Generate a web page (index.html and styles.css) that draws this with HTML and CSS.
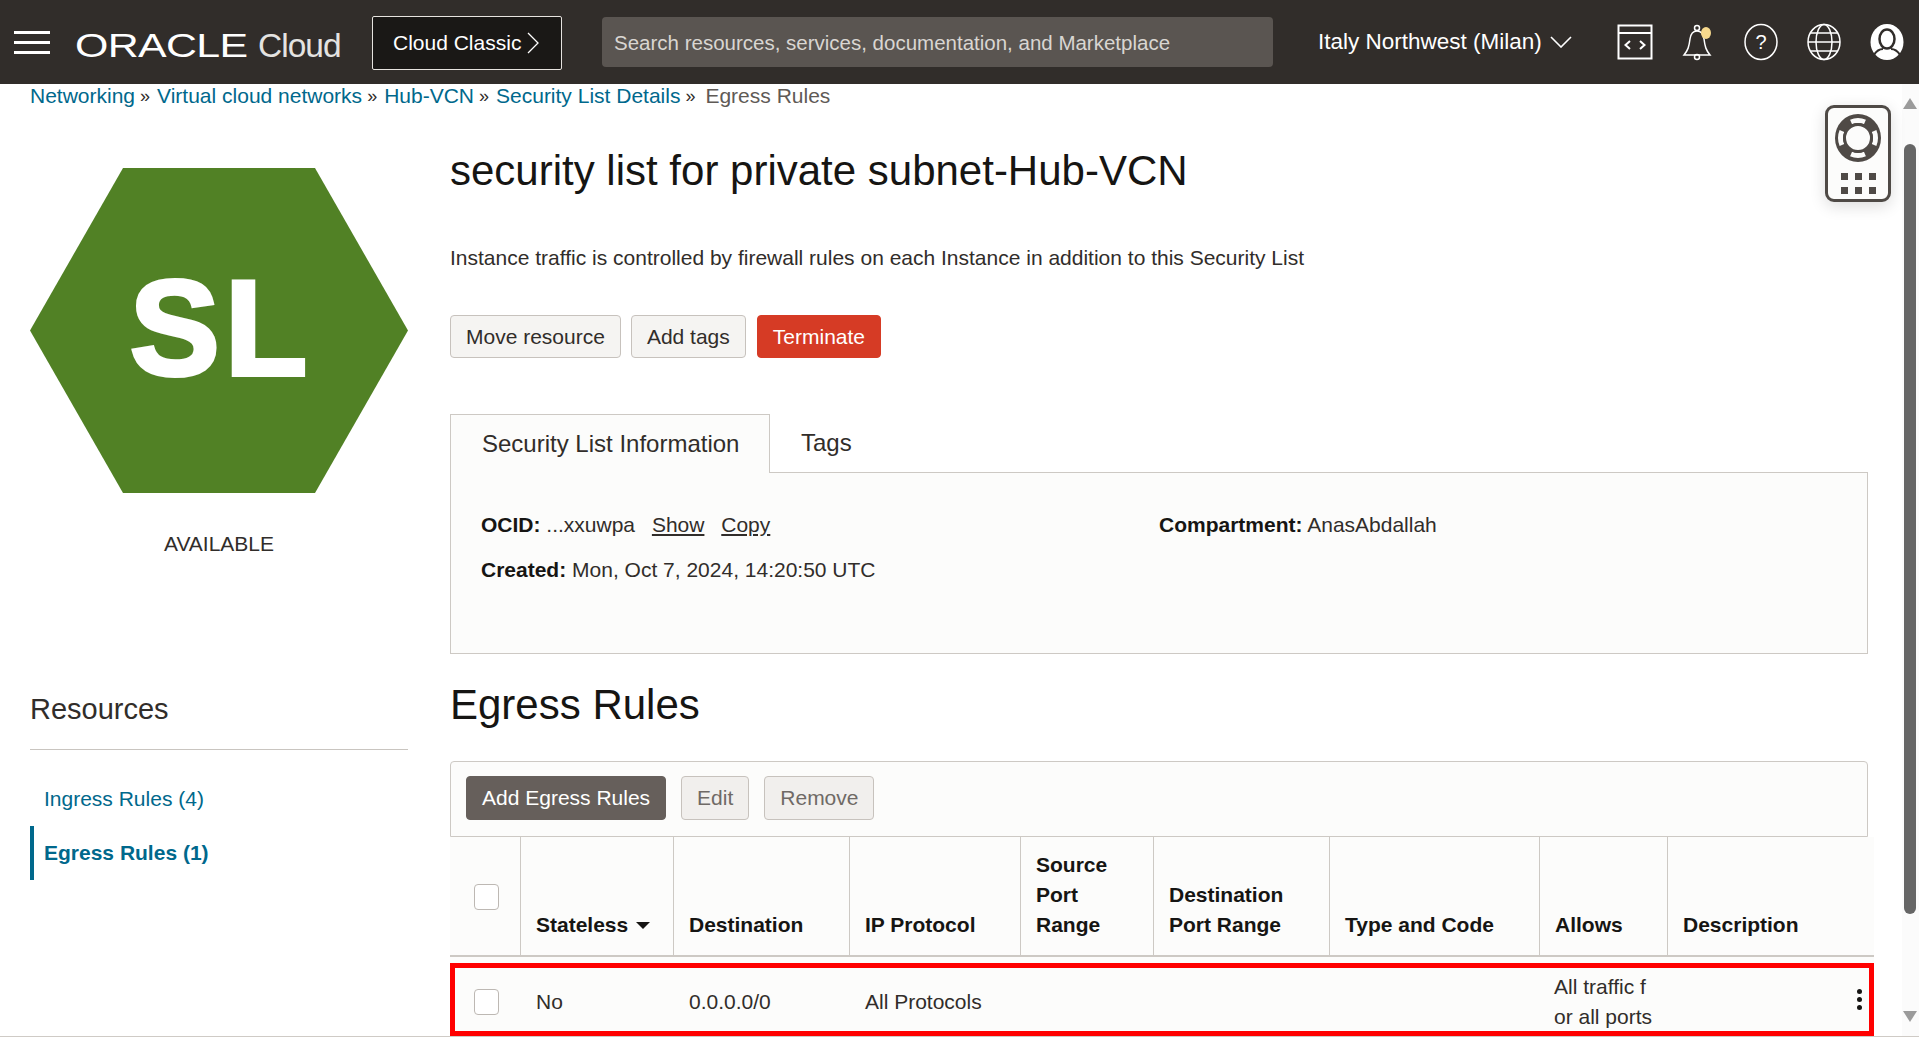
FILE: index.html
```html
<!DOCTYPE html>
<html lang="en">
<head>
<meta charset="utf-8">
<title>Egress Rules</title>
<link rel="stylesheet" href="styles.css">
</head>
<body>
<div class="page">
  <header class="topbar">
    <div class="burger"><i></i><i></i><i></i></div>
    <div class="logo"><span class="logo-oracle">ORACLE</span><span class="logo-cloud">Cloud</span></div>
    <div class="classic">Cloud Classic
      <svg class="classic-arrow" width="12" height="22" viewBox="0 0 12 22"><path d="M1 1l10 10L1 21" fill="none" stroke="#fff" stroke-width="1.3"/></svg>
    </div>
    <div class="search">Search resources, services, documentation, and Marketplace</div>
    <div class="region">Italy Northwest (Milan)
      <svg width="22" height="12" viewBox="0 0 22 12"><path d="M1 1l10 10L21 1" fill="none" stroke="#fff" stroke-width="1.6"/></svg>
    </div>
    <div class="top-icons">
      <svg width="36" height="36" viewBox="0 0 36 36" fill="none" stroke="#fff" stroke-width="2"><rect x="1.5" y="1.5" width="33" height="33"/><path d="M1.5 9h33"/><path d="M13 17l-4.500 4 4.500 4M23 17l4.500 4-4.500 4"/></svg>
      <svg width="36" height="38" viewBox="0 0 36 38" fill="none" stroke="#fff" stroke-width="1.500"><path d="M4 32c4-5 5-8 6-16 .7-5 3.500-8 7-8s6.300 3 7 8c1 8 2 11 6 16z"/><circle cx="17" cy="5" r="2.500"/><circle cx="17" cy="34" r="2.500"/><ellipse cx="26" cy="10" rx="5" ry="6" fill="#f7d98d" stroke="none"/></svg>
      <svg width="36" height="38" viewBox="0 0 36 38" fill="none" stroke="#fff" stroke-width="1.500"><ellipse cx="18" cy="19" rx="16" ry="17.500"/><text class="help-mark" x="18" y="26" text-anchor="middle">?</text></svg>
      <svg width="36" height="38" viewBox="0 0 36 38" fill="none" stroke="#fff" stroke-width="1.500"><ellipse cx="18" cy="19" rx="16" ry="17.500"/><ellipse cx="18" cy="19" rx="8" ry="17.500"/><path d="M2 19h32M4.500 10h27M4.500 28h27"/></svg>
      <svg width="36" height="38" viewBox="0 0 36 38"><ellipse cx="18" cy="19" rx="16.500" ry="18" fill="#fff"/><ellipse cx="18" cy="16" rx="7.500" ry="9.500" fill="none" stroke="#312d2a" stroke-width="2.500"/><path d="M5 32c3-5 7-6 9-6M31 32c-3-5-7-6-9-6" fill="none" stroke="#312d2a" stroke-width="2"/></svg>
    </div>
  </header>

  <div class="viewport">
    <div class="content">
      <nav class="crumbs">
        <a>Networking</a><span class="sep">»</span>
        <a>Virtual cloud networks</a><span class="sep">»</span>
        <a>Hub-VCN</a><span class="sep">»</span>
        <a>Security List Details</a><span class="sep">»</span>
        <span class="crumb-current">Egress Rules</span>
      </nav>
      <div class="columns">
        <aside class="side">
          <div class="hex">
            <svg width="378" height="325" viewBox="0 0 378 325"><polygon points="93,0 285,0 378,162.500 285,325 93,325 0,162.500" fill="#518125"/></svg>
            <span class="hex-label">SL</span>
          </div>
          <div class="status">AVAILABLE</div>
          <h3 class="res-title">Resources</h3>
          <ul class="res-list">
            <li class="res-item">Ingress Rules (4)</li>
            <li class="res-item res-active">Egress Rules (1)</li>
          </ul>
        </aside>
        <main class="main">
          <h1 class="title">security list for private subnet-Hub-VCN</h1>
          <p class="desc">Instance traffic is controlled by firewall rules on each Instance in addition to this Security List</p>
          <div class="actions">
            <button class="btn">Move resource</button>
            <button class="btn">Add tags</button>
            <button class="btn btn-danger">Terminate</button>
          </div>
          <div class="tabs">
            <div class="tab tab-active">Security List Information</div>
            <div class="tab">Tags</div>
          </div>
          <section class="panel">
            <div class="panel-col">
              <div><b>OCID:</b> ...xxuwpa <u class="link">Show</u> <u class="link">Copy</u></div>
              <div><b>Created:</b> Mon, Oct 7, 2024, 14:20:50 UTC</div>
            </div>
            <div class="panel-col">
              <div><b>Compartment:</b> AnasAbdallah</div>
            </div>
          </section>
          <h2 class="section-title">Egress Rules</h2>
          <div class="toolbar">
            <button class="btn btn-primary">Add Egress Rules</button>
            <button class="btn btn-off">Edit</button>
            <button class="btn btn-off">Remove</button>
          </div>
          <div class="table-wrap">
            <table class="rules">
              <colgroup>
                <col class="c0"><col class="c1"><col class="c2"><col class="c3"><col class="c4"><col class="c5"><col class="c6"><col class="c7"><col class="c8">
              </colgroup>
              <thead>
                <tr>
                  <th class="check-cell"><span class="check"></span></th>
                  <th>Stateless <span class="caret"></span></th>
                  <th>Destination</th>
                  <th>IP Protocol</th>
                  <th>Source Port Range</th>
                  <th>Destination Port Range</th>
                  <th>Type and Code</th>
                  <th>Allows</th>
                  <th>Description</th>
                </tr>
              </thead>
              <tbody>
                <tr>
                  <td class="check-cell"><span class="check"></span></td>
                  <td>No</td>
                  <td>0.0.0.0/0</td>
                  <td>All Protocols</td>
                  <td></td>
                  <td></td>
                  <td></td>
                  <td class="allows">All traffic f<br>or all ports</td>
                  <td class="kebab-cell"><span class="kebab"><i></i><i></i><i></i></span></td>
                </tr>
              </tbody>
            </table>
            <div class="highlight"></div>
          </div>
        </main>
      </div>
    </div>
    <div class="scrollbar">
      <span class="arrow-up"></span>
      <span class="thumb"></span>
      <span class="arrow-down"></span>
    </div>
    <div class="widget">
      <svg width="48" height="50" viewBox="0 0 48 50"><ellipse cx="24" cy="25" rx="23" ry="24" fill="#4f4a46"/><circle cx="24" cy="25" r="17.500" fill="none" stroke="#fcfcfb" stroke-width="5" pathLength="100" stroke-dasharray="13 12" stroke-dashoffset="6.500"/><circle cx="24" cy="25" r="13.500" fill="#fcfcfb" stroke="#4f4a46" stroke-width="3"/></svg>
      <div class="dots"><i></i><i></i><i></i><i></i><i></i><i></i></div>
    </div>
  </div>
</div>
</body>
</html>
```
FILE: styles.css
```css
* { box-sizing: border-box; }
html, body { margin: 0; padding: 0; height: 100%; overflow: hidden; }
body { font-family: "Liberation Sans", Arial, sans-serif; font-size: 21px; color: #312d2a; background: #fff; }
button { font-family: inherit; }

.page { display: flex; flex-direction: column; height: 1037px; overflow: hidden; }

/* Top bar */
.topbar { flex: none; height: 84px; background: #312d2a; display: flex; align-items: center; color: #fff; }
.burger { width: 36px; margin-left: 14px; display: flex; flex-direction: column; gap: 7px; }
.burger i { display: block; height: 3px; background: #fff; }
.logo { margin: 8px 0 0 25px; width: 297px; display: flex; align-items: baseline; flex: none; }
.logo-oracle { font-size: 33px; width: 183px; display: inline-block; transform: scaleX(1.3); transform-origin: left center; letter-spacing: -.5px; }
.logo-cloud { font-size: 33.500px; letter-spacing: -1px; font-weight: 400; color: #f4f3f1; opacity: .92; }
.classic { flex: none; width: 190px; height: 54px; margin-top: 1px; border: 1px solid #e6e3df; border-radius: 2px; background: #1a1816; display: flex; align-items: center; padding-left: 20px; gap: 6px; font-size: 21px; }
.search { flex: none; width: 671px; height: 50px; margin-left: 40px; background: #5a5551; border-radius: 4px; padding: 2px 0 0 12px; display: flex; align-items: center; color: #d9d6d2; font-size: 20.500px; }
.region { flex: none; margin-left: 45px; width: 254px; display: flex; align-items: center; gap: 8px; font-size: 22.500px; }
.top-icons { flex: none; display: flex; align-items: center; gap: 27px; margin-left: 45px; }

/* Body area */
.viewport { flex: 1; min-height: 0; display: flex; position: relative; border-bottom: 1px solid #cfcbc6; }
.content { flex: 1; min-width: 0; padding-left: 30px; overflow: hidden; }
.crumbs { height: 24px; line-height: 24px; font-size: 21px; white-space: nowrap; display: flex; gap: 5px; }
.crumbs a { color: #00688c; }
.crumbs .sep { margin-right: 2px; font-size: 18px; }
.crumb-current { color: #5f5a56; margin-left: 3px; }
.columns { display: flex; gap: 42px; }

/* Sidebar */
.side { flex: none; width: 378px; padding-top: 60px; }
.hex { position: relative; width: 378px; height: 325px; }
.hex svg { display: block; }
.hex-label { position: absolute; left: 4px; right: 0; top: 86px; text-align: center; color: #fff; font-size: 135px; line-height: 150px; font-weight: 700; letter-spacing: 5px; -webkit-text-stroke: 4px #fff; }
.status { margin-top: 39px; text-align: center; line-height: 24px; }
.res-title { margin: 136px 0 0; font-size: 29px; line-height: 34px; font-weight: 400; padding-bottom: 23px; border-bottom: 1px solid #c9c5c0; }
.res-list { list-style: none; margin: 22px 0 0; padding: 0; color: #00688c; }
.res-item { height: 54px; line-height: 54px; padding-left: 14px; }
.res-active { font-weight: 700; border-left: 4px solid #00688c; padding-left: 10px; }

/* Main */
.main { flex: none; width: 1424px; padding-top: 39px; }
.title { margin: 0; font-size: 42px; line-height: 48px; font-weight: 400; color: #161513; }
.desc { margin: 51px 0 0; line-height: 24px; }
.actions { margin-top: 45px; display: flex; gap: 10px; }
.btn { height: 43px; padding: 0 15px; font-size: 21px; color: #312d2a; background: #f5f4f2; border: 1px solid #c7c2bd; border-radius: 4px; }
.btn-danger { background: #d63b25; border-color: #d63b25; color: #fff; margin-left: 1px; }
.btn-primary { height: 44px; background: #665f5b; border-color: #665f5b; color: #fff; }
.btn-off { height: 44px; color: #6f6a66; background: #f1efed; }
.tabs { margin-top: 56px; display: flex; height: 59px; width: 1418px; border-bottom: 1px solid #cdc9c4; font-size: 24px; }
.tab { padding: 0 31px; line-height: 57px; white-space: nowrap; }
.tab-active { width: 320px; background: #fcfcfb; border: 1px solid #cdc9c4; border-bottom: 0; height: 59px; }
.panel { width: 1418px; height: 181px; background: #fcfcfb; border: 1px solid #cdc9c4; border-top: 0; padding: 40px 30px 0; display: flex; }
.panel-col { width: 678px; display: flex; flex-direction: column; gap: 21px; line-height: 24px; }
.panel-col b { color: #161513; }
.link { margin-left: 11px; }
.section-title { margin: 27px 0 0; font-size: 42px; line-height: 48px; font-weight: 400; color: #161513; }
.toolbar { margin-top: 32px; width: 1418px; height: 76px; background: #fcfcfb; border: 1px solid #cdc9c4; border-radius: 4px 4px 0 0; padding: 14px 15px 0; display: flex; gap: 15px; }

/* Table */
.table-wrap { position: relative; }
.rules { width: 1424px; table-layout: fixed; border-collapse: separate; border-spacing: 0; background: #fcfcfb; }
.c0 { width: 71px; } .c1 { width: 153px; } .c2 { width: 176px; } .c3 { width: 171px; } .c4 { width: 133px; }
.c5 { width: 176px; } .c6 { width: 210px; } .c7 { width: 128px; } .c8 { width: 206px; }
.rules th { height: 120px; vertical-align: bottom; text-align: left; padding: 0 15px 15px; line-height: 30px; font-weight: 700; color: #161513; border-right: 1px solid #cdc9c4; border-bottom: 2px solid #cdc9c4; }
.rules th:last-child { border-right: 0; }
.rules td { height: 90px; padding: 0 15px; line-height: 30px; vertical-align: middle; }
.rules .allows { white-space: nowrap; padding: 0 0 0 14px; }
.rules .check-cell { padding: 0 0 0 24px; vertical-align: top; }
.rules td.check-cell { padding-top: 32px; }
.rules th.check-cell { padding-top: 47px; }
.check { display: block; width: 25px; height: 26px; background: #fff; border: 1px solid #bdb8b3; border-radius: 4px; }
.caret { display: inline-block; width: 0; height: 0; margin: 0 0 3px 2px; border-style: solid; border-width: 7px 7px 0; border-color: #161513 transparent transparent; }
.kebab-cell { position: relative; }
.kebab { position: absolute; right: 12px; top: 32px; display: flex; flex-direction: column; gap: 3px; }
.kebab i { display: block; width: 5px; height: 5px; border-radius: 50%; background: #161513; }
.highlight { position: absolute; left: 0; right: 0; top: 126px; height: 73px; border: 5px solid #f00; pointer-events: none; }

/* Scrollbar */
.scrollbar { flex: none; width: 17px; background: #fbfbfb; display: flex; flex-direction: column; align-items: center; padding-right: 2px; }
.arrow-up { margin-top: 14px; width: 0; height: 0; border-style: solid; border-width: 0 7.500px 11px; border-color: transparent transparent #9b9b9b; }
.thumb { margin-top: 35px; width: 12px; height: 770px; background: #666; border-radius: 6px; }
.arrow-down { margin-top: 97px; width: 0; height: 0; border-style: solid; border-width: 11px 7.500px 0; border-color: #9b9b9b transparent transparent; }

/* Floating help widget */
.widget { position: absolute; left: 1825px; top: 21px; width: 66px; height: 97px; background: #fcfcfb; border: 3px solid #4f4a46; border-radius: 9px; box-shadow: 0 4px 16px rgba(0,0,0,.14); display: flex; flex-direction: column; align-items: center; padding-top: 5px; }
.dots { margin-top: 10px; display: grid; grid-template-columns: repeat(3, 7px); gap: 7px; }
.dots i { display: block; width: 7px; height: 7px; background: #4f4a46; }
.help-mark { font-family: "Liberation Sans", sans-serif; font-size: 20px; fill: #fff; stroke: none; }
```
